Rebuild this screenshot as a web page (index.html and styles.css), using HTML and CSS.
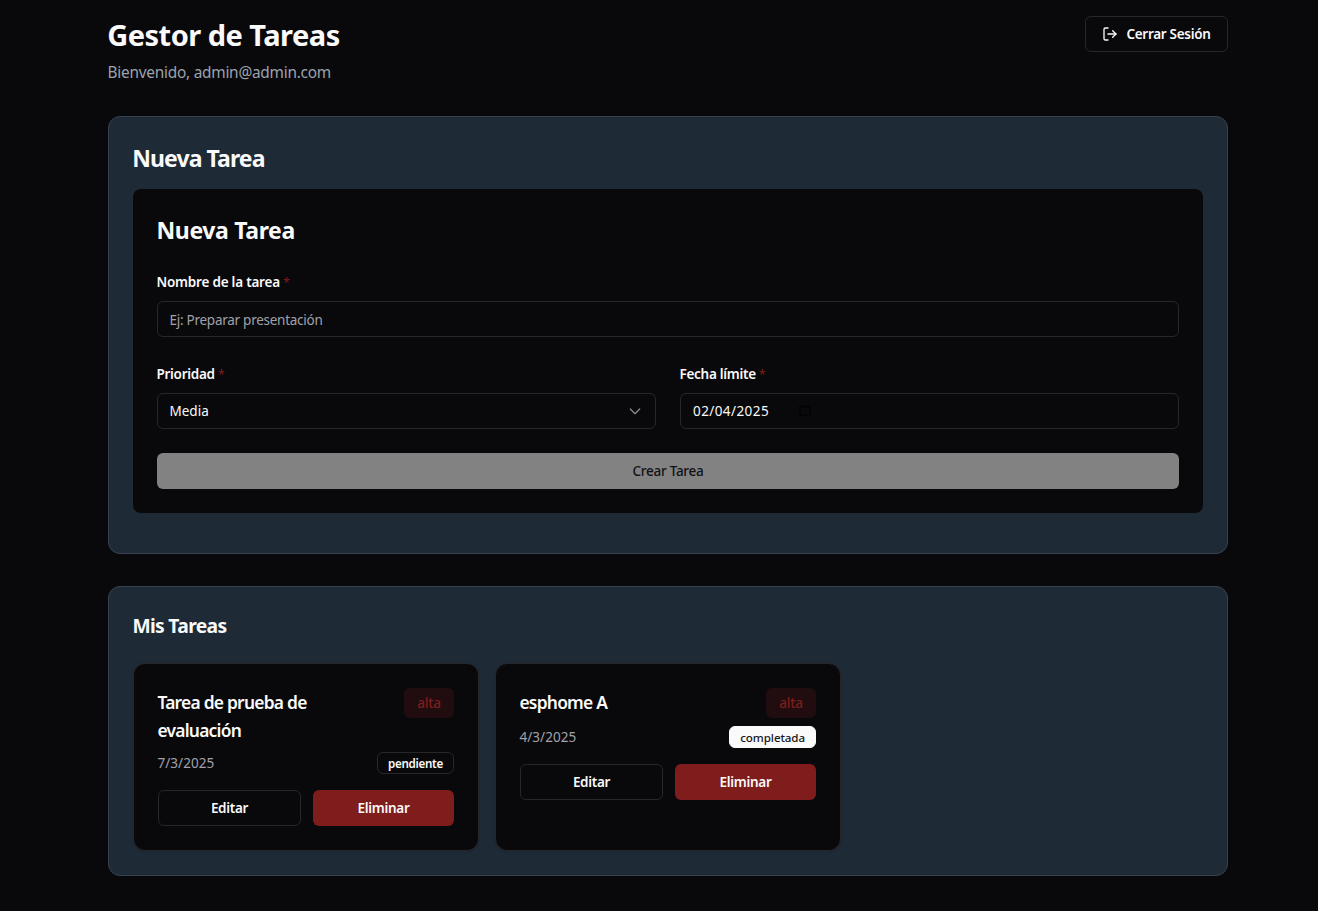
FILE: index.html
```html
<!DOCTYPE html>
<html lang="es">
<head>
<meta charset="utf-8">
<title>Gestor de Tareas</title>
<link rel="stylesheet" href="styles.css">
</head>
<body>
<div class="container">
  <header class="header">
    <div>
      <h1 class="app-title">Gestor de Tareas</h1>
      <p class="welcome">Bienvenido, admin@admin.com</p>
    </div>
    <button class="btn btn-outline logout">
      <svg class="icon" viewBox="0 0 24 24"><path d="M9 21H5a2 2 0 0 1-2-2V5a2 2 0 0 1 2-2h4"/><path d="m16 17 5-5-5-5"/><path d="M21 12H9"/></svg>
      Cerrar Sesión
    </button>
  </header>

  <section class="panel panel-form">
    <h2 class="panel-title">Nueva Tarea</h2>
    <form class="form">
      <h2 class="form-title">Nueva Tarea</h2>
      <div class="field">
        <label class="label">Nombre de la tarea <span class="required">*</span></label>
        <div class="control placeholder">Ej: Preparar presentación</div>
      </div>
      <div class="row">
        <div class="field">
          <label class="label label-tight">Prioridad <span class="required">*</span></label>
          <div class="control select"><span>Media</span>
            <svg class="chevron" viewBox="0 0 24 24"><path d="m5 9 7 7 7-7"/></svg>
          </div>
        </div>
        <div class="field">
          <label class="label label-tight">Fecha límite <span class="required">*</span></label>
          <div class="control date"><span class="date-value">02/04/2025</span>
            <svg class="calendar" viewBox="0 0 12 12"><path d="M1 2h10v9H1z"/><path d="M1 3h10"/></svg>
          </div>
        </div>
      </div>
      <button class="btn btn-submit" type="button">Crear Tarea</button>
    </form>
  </section>

  <section class="panel">
    <h2 class="list-title">Mis Tareas</h2>
    <div class="cards">
      <article class="card">
        <div class="card-head">
          <h3 class="card-title">Tarea de prueba de evaluación</h3>
          <span class="priority">alta</span>
        </div>
        <div class="card-meta">
          <span class="card-date">7/3/2025</span>
          <span class="status">pendiente</span>
        </div>
        <div class="actions">
          <button class="btn btn-outline">Editar</button>
          <button class="btn btn-danger">Eliminar</button>
        </div>
      </article>
      <article class="card">
        <div class="card-head">
          <h3 class="card-title">esphome A</h3>
          <span class="priority">alta</span>
        </div>
        <div class="card-meta">
          <span class="card-date">4/3/2025</span>
          <span class="status status-done">completada</span>
        </div>
        <div class="actions">
          <button class="btn btn-outline">Editar</button>
          <button class="btn btn-danger">Eliminar</button>
        </div>
      </article>
    </div>
  </section>
</div>
</body>
</html>
```
FILE: styles.css
```css
* { box-sizing: border-box; margin: 0; padding: 0; }

body {
  background: #09090b;
  color: #fafafa;
  font-family: "Noto Sans", sans-serif;
  font-size: 13.5px;
  line-height: 20px;
  overflow: hidden;
}

svg { fill: none; stroke: currentColor; stroke-width: 2; stroke-linecap: round; stroke-linejoin: round; flex: none; }

.container { width: 1120px; margin-left: 108px; padding-top: 16px; }

.header { display: flex; justify-content: space-between; align-items: flex-start; height: 100px; }
.app-title { font-size: 29px; font-weight: 700; line-height: 38px; letter-spacing: -0.52px; text-indent: -0.7px; }
.welcome { font-size: 15.4px; line-height: 24px; margin-top: 7px; letter-spacing: -0.25px; text-indent: -0.4px; color: #9ca3af; }

.btn {
  display: flex; align-items: center; justify-content: center;
  height: 36px; padding: 0 16px;
  border: 0; border-radius: 6px;
  font: 600 13.5px/20px "Noto Sans", sans-serif;
  letter-spacing: -0.3px;
  color: #fafafa;
  white-space: nowrap;
}
.btn-outline { background: #09090b; border: 1px solid #27272a; }
.btn-danger { background: #7f1d1d; }
.btn-submit { width: 100%; background: #828283; color: #111113; font-weight: 500; letter-spacing: -0.26px; }
.logout { width: 143px; gap: 8px; }
.icon { width: 16px; height: 16px; }

.panel { background: #1f2a37; border: 1px solid #374151; border-radius: 12px; padding: 24px; margin-bottom: 32px; }
.panel-form { padding-bottom: 40px; }
.panel-title { font-size: 23px; line-height: 32px; letter-spacing: -0.92px; text-indent: -0.7px; margin-bottom: 16px; padding-top: 1px; height: 32px; }

.form { display: flex; flex-direction: column; gap: 24px; padding: 24px; border-radius: 8px; background: #09090b; }
.form-title { font-size: 23px; line-height: 34px; height: 32px; letter-spacing: -0.36px; text-indent: -0.5px; }
.row { display: grid; grid-template-columns: 1fr 1fr; gap: 24px; }
.label { display: block; height: 24px; line-height: 27px; margin-bottom: 8px; font-weight: 600; letter-spacing: -0.22px; text-indent: -0.5px; }
.label-tight { letter-spacing: -0.29px; }
.required { color: #7f1d1d; font-size: 12px; font-weight: 400; }
.control { display: flex; align-items: center; height: 36px; padding: 0 12px; border: 1px solid #27272a; border-radius: 6px; }
.placeholder { color: #a1a1aa; letter-spacing: -0.265px; padding-top: 2px; text-indent: -0.5px; }
.select { justify-content: space-between; text-indent: -0.5px; }
.chevron { width: 16px; height: 16px; color: #88888d; }
.date-value { letter-spacing: 0.42px; }
.calendar { width: 12px; height: 12px; margin: -3px 0 0 30px; color: #030304; stroke-width: 1.3; }

.list-title { font-size: 19.3px; line-height: 30px; height: 28px; letter-spacing: -0.67px; text-indent: -0.6px; margin-bottom: 24px; }
.cards { display: grid; grid-template-columns: repeat(3, 1fr); gap: 16px; }
.card { padding: 24px; border: 1px solid #27272a; border-radius: 12px; background: #09090b; box-shadow: 0 1px 3px rgba(0, 0, 0, 0.1); }
.card-head { display: flex; justify-content: space-between; align-items: flex-start; }
.card-title { width: 180px; margin-left: -0.6px; font-size: 17.4px; font-weight: 600; line-height: 28px; letter-spacing: -0.75px; }
.priority { width: 50px; height: 30px; border-radius: 6px; background: #210d0f; color: #7f1d1d; font-weight: 500; line-height: 30px; text-align: center; letter-spacing: -0.2px; }
.card-meta { display: flex; justify-content: space-between; align-items: center; height: 22px; margin: 8px 0 16px; }
.card-date { margin-left: -0.6px; color: #a1a1aa; letter-spacing: 0.06px; }
.status { height: 22px; padding: 0 10px; border: 1px solid #27272a; border-radius: 6px; font-size: 11.6px; font-weight: 600; line-height: 22px; letter-spacing: -0.29px; }
.status-done { background: #fafafa; border-color: #fafafa; color: #18181b; font-weight: 500; letter-spacing: -0.09px; }
.actions { display: flex; gap: 12px; }
.actions .btn { flex: 1 1 0%; }
```
